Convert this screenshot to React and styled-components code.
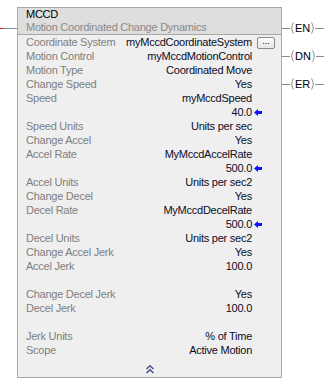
import React from "react";
import styled, { createGlobalStyle } from "styled-components";

const GlobalStyle = createGlobalStyle`
  html, body {
    margin: 0;
    padding: 0;
    background: #ffffff;
  }
  body {
    font-family: "Liberation Sans", Arial, sans-serif;
    font-size: 11px;
    letter-spacing: -0.25px;
  }
`;

const Rung = styled.div`
  display: flex;
  align-items: flex-start;
  padding-top: 7px;
  width: 324px;
`;

const InputWire = styled.div`
  width: 17px;
  padding-top: 21px;
  flex: none;
`;

const Wire = styled.div`
  height: 1px;
  background: #8c8c8c;
  border-left: 3px solid #e01010;
`;

const Block = styled.div`
  width: 265px;
  flex: none;
  box-sizing: border-box;
  border: 1px solid #a8a8a8;
  background: #efefef;
`;

const Header = styled.div`
  background: #dedede;
  border-bottom: 1px solid #a8a8a8;
  padding: 0 0 0 8px;
`;

const Name = styled.div`
  line-height: 13px;
  height: 13px;
  color: #000000;
`;

const Description = styled.div`
  line-height: 13px;
  height: 13px;
  color: #8a8a8a;
  white-space: nowrap;
`;

const Params = styled.div`
  display: grid;
  grid-template-columns: 1fr auto 29px;
  grid-auto-rows: 14px;
  padding-left: 8px;
  line-height: 14px;
`;

const Label = styled.div`
  color: #808080;
  white-space: nowrap;
`;

const Value = styled.div`
  color: #0c0c1e;
  text-align: right;
  white-space: nowrap;
`;

const Extra = styled.div`
  display: flex;
  align-items: center;
  padding-left: ${(p) => p.$pad || 2}px;
`;

const BrowseButton = styled.div`
  width: 16px;
  height: 10px;
  margin-top: 1px;
  border: 1px solid #8a8a8a;
  border-radius: 2px;
  background: linear-gradient(#ffffff, #e6e6e6);
  font-size: 9px;
  line-height: 6px;
  letter-spacing: 0;
  text-align: center;
  color: #000;
`;

const Footer = styled.div`
  height: 20px;
  display: flex;
  justify-content: center;
  align-items: flex-end;
  padding-bottom: 3px;
  box-sizing: border-box;
`;

const Coils = styled.div`
  flex: 1;
  display: flex;
  flex-direction: column;
  gap: 14px;
  padding-top: 14px;
`;

const Coil = styled.div`
  height: 14px;
  display: flex;
  align-items: center;
`;

const CoilLine = styled.div`
  height: 1px;
  background: #8c8c8c;
  width: ${(p) => (p.$grow ? "auto" : `${p.$w}px`)};
  flex: ${(p) => (p.$grow ? 1 : "none")};
`;

const CoilText = styled.span`
  color: #000;
  line-height: 14px;
  padding: 0 1px;
  letter-spacing: 0;
`;

const Paren = ({ flip }) => (
  <svg width="4" height="12" viewBox="0 0 4 12" style={{ flex: "none" }}>
    <path
      d={flip ? "M0.5 0.5 Q4 6 0.5 11.5" : "M3.5 0.5 Q0 6 3.5 11.5"}
      fill="none"
      stroke="#8c8c8c"
      strokeWidth="1"
    />
  </svg>
);

const Arrow = () => (
  <svg width="8" height="7" viewBox="0 0 8 7">
    <polygon points="0,3.5 4,0 4,2 8,2 8,5 4,5 4,7" fill="#1010ff" />
  </svg>
);

const DoubleUp = () => (
  <svg width="8" height="9" viewBox="0 0 8 9">
    <polyline points="0.5,4 4,0.8 7.5,4" fill="none" stroke="#3a4a90" strokeWidth="1.4" />
    <polyline points="0.5,8 4,4.8 7.5,8" fill="none" stroke="#3a4a90" strokeWidth="1.4" />
  </svg>
);

const rows = [
  { label: "Coordinate System", value: "myMccdCoordinateSystem", button: true },
  { label: "Motion Control", value: "myMccdMotionControl" },
  { label: "Motion Type", value: "Coordinated Move" },
  { label: "Change Speed", value: "Yes" },
  { label: "Speed", value: "myMccdSpeed" },
  { label: "", value: "40.0", arrow: true },
  { label: "Speed Units", value: "Units per sec" },
  { label: "Change Accel", value: "Yes" },
  { label: "Accel Rate", value: "MyMccdAccelRate" },
  { label: "", value: "500.0", arrow: true },
  { label: "Accel Units", value: "Units per sec2" },
  { label: "Change Decel", value: "Yes" },
  { label: "Decel Rate", value: "MyMccdDecelRate" },
  { label: "", value: "500.0", arrow: true },
  { label: "Decel Units", value: "Units per sec2" },
  { label: "Change Accel Jerk", value: "Yes" },
  { label: "Accel Jerk", value: "100.0" },
  { label: "", value: "" },
  { label: "Change Decel Jerk", value: "Yes" },
  { label: "Decel Jerk", value: "100.0" },
  { label: "", value: "" },
  { label: "Jerk Units", value: "% of Time" },
  { label: "Scope", value: "Active Motion" },
];

const coils = ["EN", "DN", "ER"];

const App = () => {
  return (
    <>
      <GlobalStyle />
      <Rung>
        <InputWire>
          <Wire />
        </InputWire>
        <Block>
          <Header>
            <Name>MCCD</Name>
            <Description>Motion Coordinated Change Dynamics</Description>
          </Header>
          <Params>
            {rows.map((r, i) => (
              <React.Fragment key={i}>
                <Label>{r.label}</Label>
                <Value>{r.value}</Value>
                <Extra $pad={r.button ? 5 : 2}>
                  {r.button && <BrowseButton>...</BrowseButton>}
                  {r.arrow && <Arrow />}
                </Extra>
              </React.Fragment>
            ))}
          </Params>
          <Footer>
            <DoubleUp />
          </Footer>
        </Block>
        <Coils>
          {coils.map((c) => (
            <Coil key={c}>
              <CoilLine $w={8} />
              <Paren />
              <CoilText>{c}</CoilText>
              <Paren flip />
              <CoilLine $grow />
            </Coil>
          ))}
        </Coils>
      </Rung>
    </>
  );
};

export default App;
